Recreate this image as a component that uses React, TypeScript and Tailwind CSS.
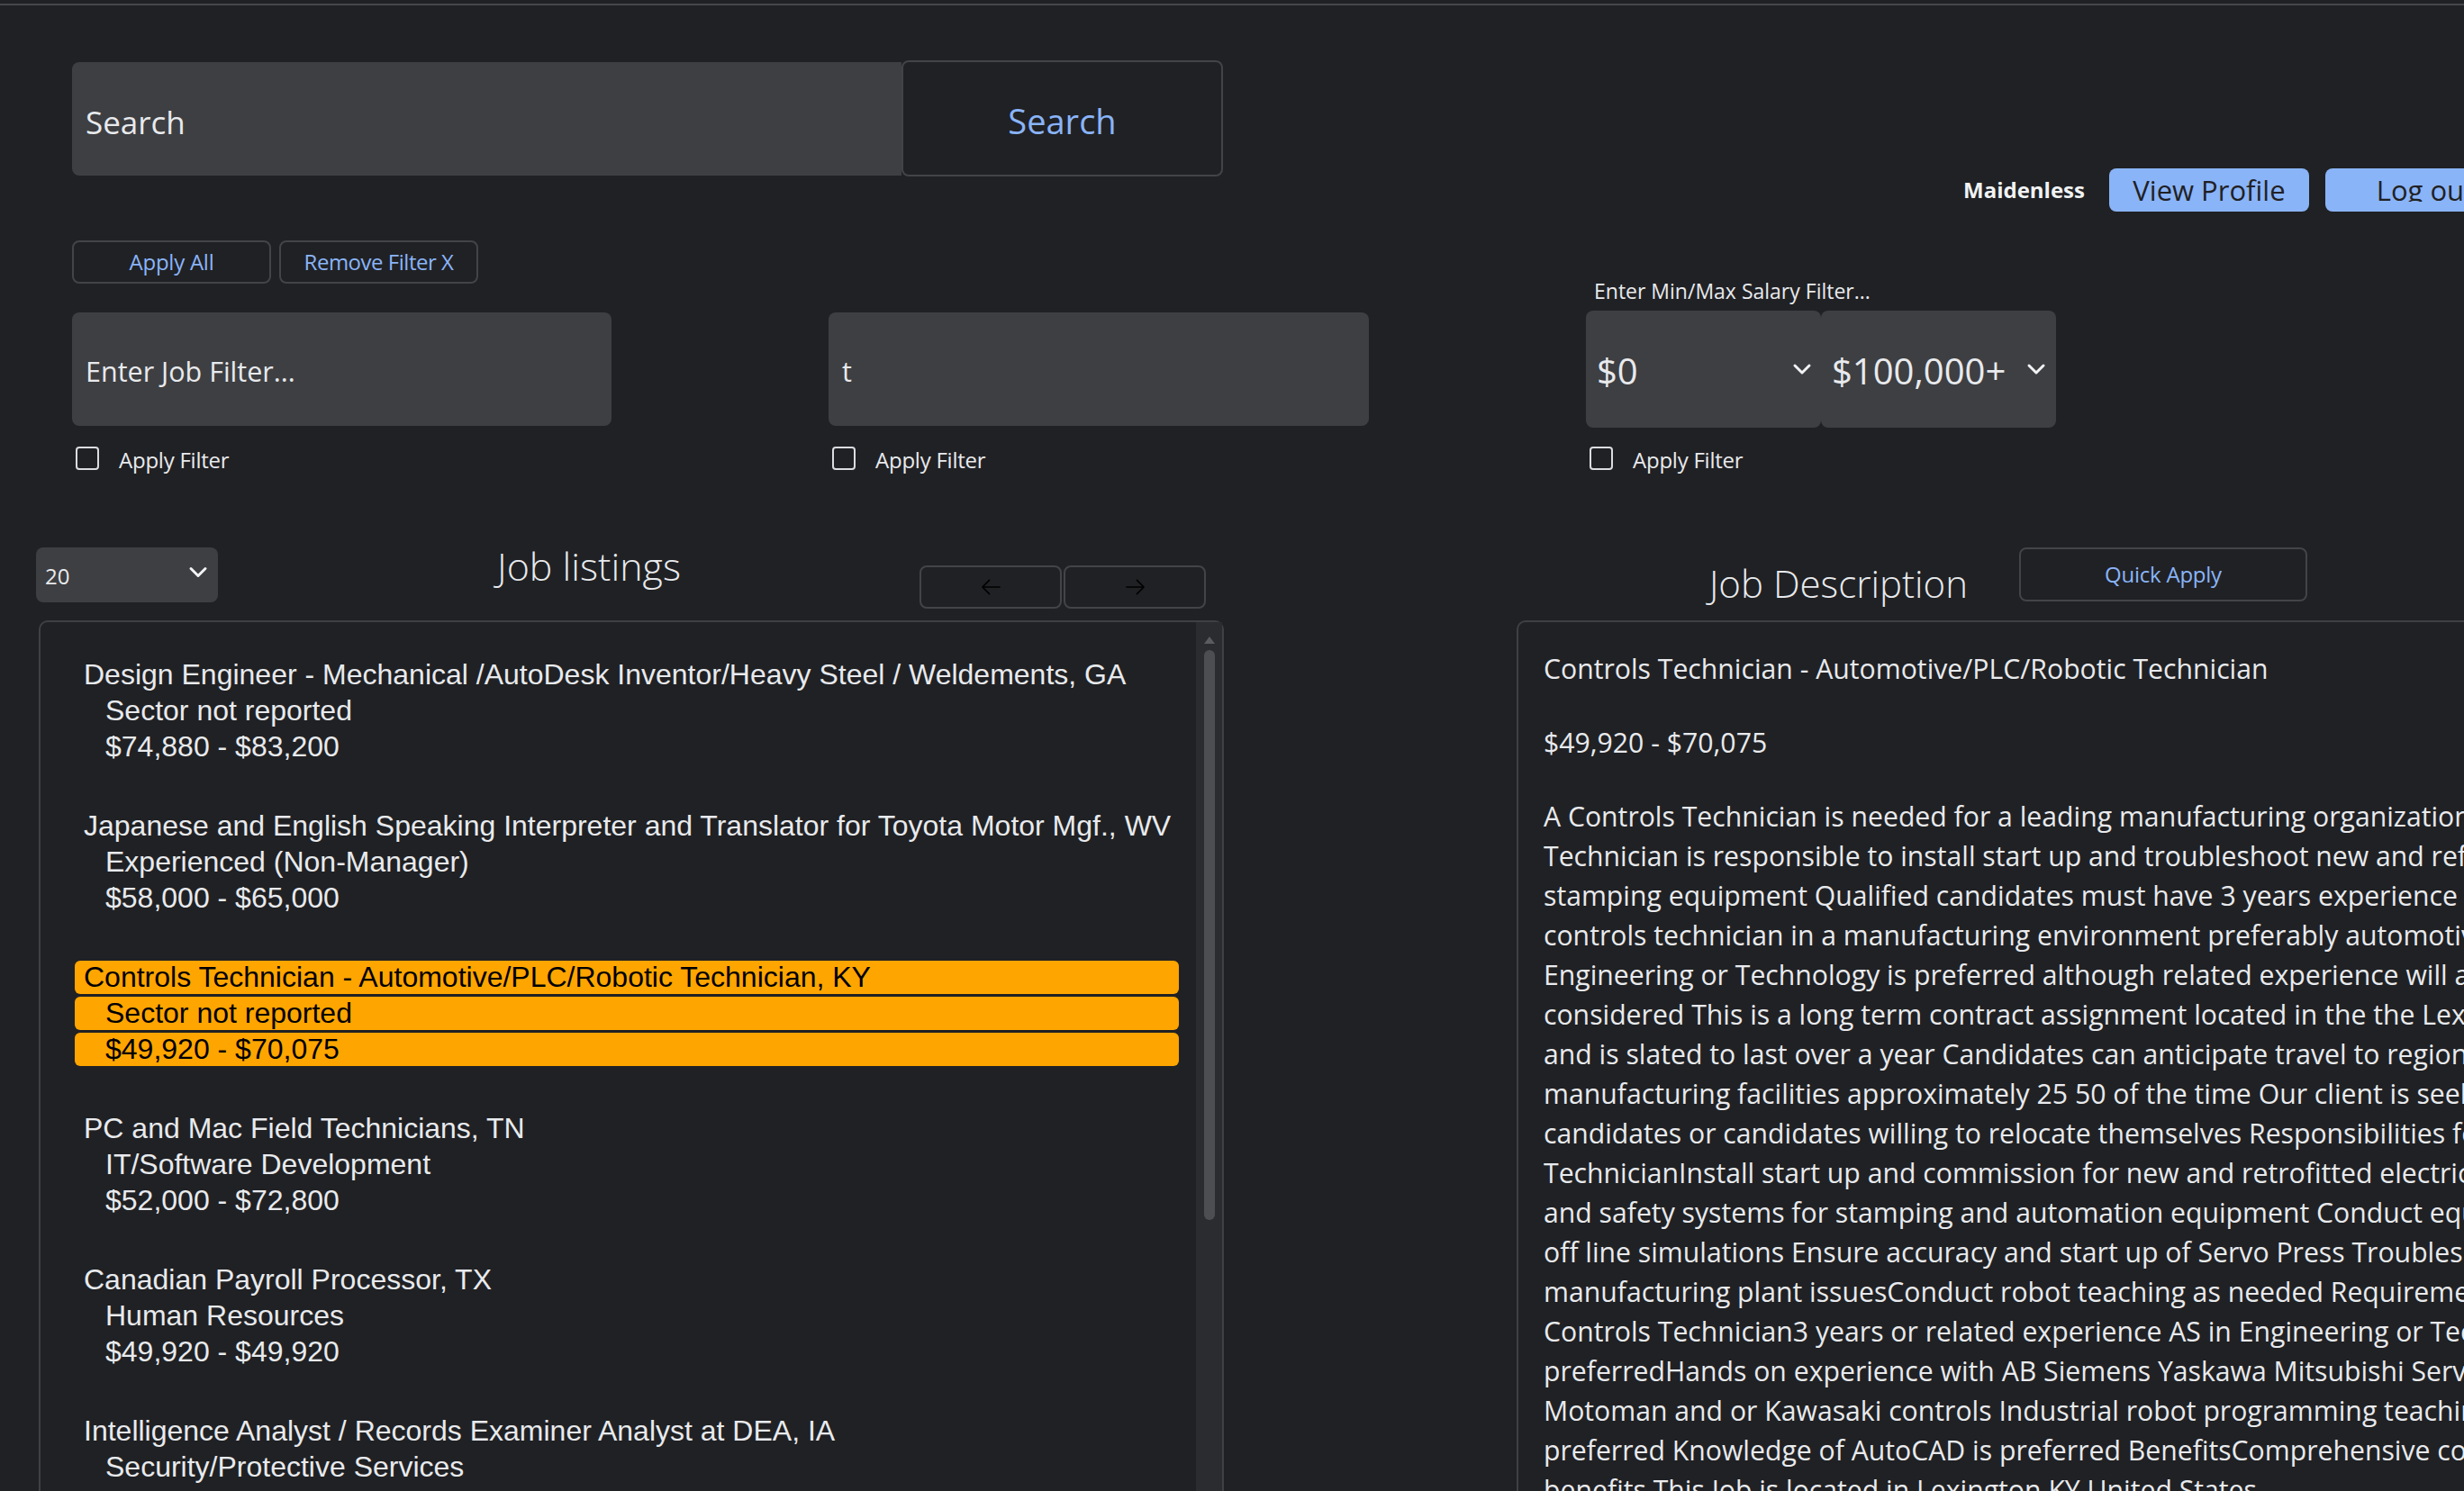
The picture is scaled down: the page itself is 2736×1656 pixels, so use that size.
import React from "react";

const jobs = [
  {
    t: "Design Engineer - Mechanical /AutoDesk Inventor/Heavy Steel / Weldements, GA",
    s: "Sector not reported",
    p: "$74,880 - $83,200",
  },
  {
    t: "Japanese and English Speaking Interpreter and Translator for Toyota Motor Mgf., WV",
    s: "Experienced (Non-Manager)",
    p: "$58,000 - $65,000",
  },
  {
    t: "Controls Technician - Automotive/PLC/Robotic Technician, KY",
    s: "Sector not reported",
    p: "$49,920 - $70,075",
    sel: true,
  },
  {
    t: "PC and Mac Field Technicians, TN",
    s: "IT/Software Development",
    p: "$52,000 - $72,800",
  },
  {
    t: "Canadian Payroll Processor, TX",
    s: "Human Resources",
    p: "$49,920 - $49,920",
  },
  {
    t: "Intelligence Analyst / Records Examiner Analyst at DEA, IA",
    s: "Security/Protective Services",
    p: "$45,760 - $62,400",
  },
  {
    t: "Maintenance Technician, OH",
    s: "Skilled Trades",
    p: "$41,600 - $56,160",
  },
];

const descLines = [
  "A Controls Technician is needed for a leading manufacturing organization The Controls",
  "Technician is responsible to install start up and troubleshoot new and refurbished",
  "stamping equipment Qualified candidates must have 3 years experience as a",
  "controls technician in a manufacturing environment preferably automotive An AS in",
  "Engineering or Technology is preferred although related experience will also be",
  "considered This is a long term contract assignment located in the the Lexington area",
  "and is slated to last over a year Candidates can anticipate travel to regional",
  "manufacturing facilities approximately 25 50 of the time Our client is seeking local",
  "candidates or candidates willing to relocate themselves Responsibilities for the Controls",
  "TechnicianInstall start up and commission for new and retrofitted electrical controls",
  "and safety systems for stamping and automation equipment Conduct equipment",
  "off line simulations Ensure accuracy and start up of Servo Press Troubleshoot",
  "manufacturing plant issuesConduct robot teaching as needed Requirements for the",
  "Controls Technician3 years or related experience AS in Engineering or Technology",
  "preferredHands on experience with AB Siemens Yaskawa Mitsubishi Servo Press Fanuc",
  "Motoman and or Kawasaki controls Industrial robot programming teaching experience",
  "preferred Knowledge of AutoCAD is preferred BenefitsComprehensive compensation and",
  "benefits This Job is located in Lexington KY United States.",
];

function Chevron({ className }: { className?: string }) {
  return (
    <svg
      viewBox="0 0 22 14"
      className={className}
      fill="none"
      stroke="#f1f3f4"
      strokeWidth={3}
      strokeLinecap="round"
      strokeLinejoin="round"
    >
      <polyline points="3,3 11,11 19,3" />
    </svg>
  );
}

function Arrow({ dir }: { dir: "left" | "right" }) {
  return (
    <svg
      viewBox="0 0 24 20"
      className="w-[23px] h-[20px]"
      fill="none"
      stroke="#000000"
      strokeWidth={1.7}
      strokeLinecap="round"
      strokeLinejoin="round"
    >
      {dir === "left" ? (
        <path d="M22 10H2M10 2L2 10L10 18" />
      ) : (
        <path d="M2 10H22M14 2L22 10L14 18" />
      )}
    </svg>
  );
}

function CheckRow() {
  return (
    <div className="flex items-center h-[36px]">
      <div className="ml-[4px] w-[26px] h-[26px] rounded-[4px] border-2 border-[#dadce0]" />
      <span className="ml-[22px] text-[24px] leading-[36px] pt-[3px] tracking-[-0.01em] text-[#e8eaed]">
        Apply Filter
      </span>
    </div>
  );
}

export default function App() {
  return (
    <div className="w-[2736px] h-[1656px] overflow-hidden bg-[#202124] text-[#e8eaed] font-['Open_Sans','Noto_Sans',sans-serif]">
      {/* top rule */}
      <div className="h-[4px]" />
      <div className="h-[2px] bg-[#46474a]" />

      {/* Row A: search + user */}
      <div className="mt-[61px] pl-[80px] flex items-start">
        <div className="shrink-0 w-[921px] h-[126px] mt-[2px] bg-[#3e3f42] rounded-l-[8px] pl-[15px] pt-[49px] text-[35px] leading-none">
          Search
        </div>
        <div className="shrink-0 w-[357px] h-[129px] border-2 border-[#434447] rounded-[8px] pt-[46px] text-center text-[38px] leading-none text-[#8ab4f8]">
          Search
        </div>
        <div className="shrink-0 ml-[822px] mt-[120px] flex items-start">
          <span className="mt-[12px] text-[24px] leading-none font-bold whitespace-nowrap text-[#f1f3f4]">
            Maidenless
          </span>
          <div className="ml-[27px] w-[222px] h-[48px] rounded-[8px] bg-[#8ab4f8] overflow-hidden text-center text-[#202124]">
            <span className="block h-[37px] overflow-hidden pt-[8px] text-[31px] leading-[32px] whitespace-nowrap">
              View Profile
            </span>
          </div>
          <div className="shrink-0 ml-[18px] w-[222px] h-[48px] rounded-[8px] bg-[#8ab4f8] overflow-hidden text-center text-[#202124]">
            <span className="block h-[37px] overflow-hidden pt-[8px] text-[31px] leading-[32px] whitespace-nowrap">
              Log out
            </span>
          </div>
        </div>
      </div>

      {/* Row B: filter buttons */}
      <div className="mt-[32px] pl-[80px] flex gap-[9px]">
        <div className="w-[221px] h-[48px] border-2 border-[#434447] rounded-[8px] flex items-center justify-center text-[24px] leading-none tracking-[-0.01em] text-[#8ab4f8]">
          Apply All
        </div>
        <div className="w-[221px] h-[48px] border-2 border-[#434447] rounded-[8px] flex items-center justify-center text-[24px] leading-none tracking-[-0.02em] text-[#8ab4f8]">
          Remove Filter X
        </div>
      </div>

      {/* Row C: filters */}
      <div className="mt-[32px] pl-[80px] flex items-start">
        <div className="shrink-0 w-[840px]">
          <div className="w-[599px] h-[126px] bg-[#3e3f42] rounded-[8px] pl-[15px] pt-[50px] text-[30.5px] leading-none">
            Enter Job Filter...
          </div>
          <div className="mt-[18px]">
            <CheckRow />
          </div>
        </div>
        <div className="shrink-0 w-[841px]">
          <div className="w-[600px] h-[126px] bg-[#3e3f42] rounded-[8px] pl-[15px] pt-[50px] text-[30.5px] leading-none">
            t
          </div>
          <div className="mt-[18px]">
            <CheckRow />
          </div>
        </div>
        <div className="shrink-0 mt-[-42px]">
          <div className="pl-[9px] text-[23px] leading-[36px] whitespace-nowrap">
            Enter Min/Max Salary Filter...
          </div>
          <div className="mt-[4px] flex">
            <div className="w-[261px] h-[130px] bg-[#3e3f42] rounded-[8px] flex justify-between pl-[12px] pr-[10px]">
              <span className="pt-[47px] text-[40px] leading-none">$0</span>
              <Chevron className="mt-[58px] w-[22px] h-[14px]" />
            </div>
            <div className="w-[261px] h-[130px] bg-[#3e3f42] rounded-[8px] flex justify-between pl-[12px] pr-[11px]">
              <span className="pt-[47px] text-[40px] leading-none whitespace-nowrap">
                $100,000+
              </span>
              <Chevron className="mt-[58px] w-[22px] h-[14px]" />
            </div>
          </div>
          <div className="mt-[16px]">
            <CheckRow />
          </div>
        </div>
      </div>

      {/* Row D: listings + description */}
      <div className="mt-[80px] flex items-start">
        {/* left column */}
        <div className="shrink-0 ml-[40px] w-[1319px]">
          <div className="h-[82px] flex items-start">
            <div className="shrink-0 w-[202px] h-[61px] mt-[1px] bg-[#3e3f42] rounded-[8px] flex justify-between pl-[10px] pr-[11px]">
              <span className="pt-[20px] text-[24px] leading-none">20</span>
              <Chevron className="mt-[20px] w-[22px] h-[15px]" />
            </div>
            <div className="shrink-0 ml-[100px] w-[624px] text-center text-[43px] leading-none font-light whitespace-nowrap">
              Job listings
            </div>
            <div className="shrink-0 ml-[55px] mt-[21px] flex gap-[2px]">
              <div className="w-[158px] h-[48px] border-2 border-[#434447] rounded-[8px] flex items-center justify-center">
                <Arrow dir="left" />
              </div>
              <div className="w-[158px] h-[48px] border-2 border-[#434447] rounded-[8px] flex items-center justify-center">
                <Arrow dir="right" />
              </div>
            </div>
          </div>
          <div className="ml-[3px] h-[1000px] border-2 border-[#3f4043] rounded-t-[10px] flex">
            <div className="flex-1 min-w-0 overflow-hidden pt-[40px] pl-[38px] pr-[19px] font-['Liberation_Sans',Arial,sans-serif] text-[32px]">
              {jobs.map((j, i) => (
                <div key={i} className="pb-[48px]">
                  <div
                    className={`h-[37px] leading-[37px] mb-[3px] rounded-[6px] whitespace-nowrap pl-[10px] ${
                      j.sel ? "bg-[#ffa500] text-black" : "text-[#e8eaed]"
                    }`}
                  >
                    {j.t}
                  </div>
                  <div
                    className={`h-[37px] leading-[37px] mb-[3px] rounded-[6px] whitespace-nowrap pl-[34px] ${
                      j.sel ? "bg-[#ffa500] text-black" : "text-[#e8eaed]"
                    }`}
                  >
                    {j.s}
                  </div>
                  <div
                    className={`h-[37px] leading-[37px] mb-[3px] rounded-[6px] whitespace-nowrap pl-[34px] ${
                      j.sel ? "bg-[#ffa500] text-black" : "text-[#e8eaed]"
                    }`}
                  >
                    {j.p}
                  </div>
                </div>
              ))}
            </div>
            <div className="shrink-0 w-[29px] bg-[#2b2c2f] flex flex-col items-center pt-[16px]">
              <div className="w-0 h-0 border-l-[6px] border-r-[6px] border-b-[8px] border-l-transparent border-r-transparent border-b-[#5b5c5f]" />
              <div className="mt-[7px] w-[12px] h-[633px] rounded-full bg-[#4d4e51]" />
            </div>
          </div>
        </div>

        {/* right column */}
        <div className="shrink-0 ml-[325px] w-[1300px]">
          <div className="h-[82px] flex items-start">
            <div className="shrink-0 w-[558px] pl-[214px] mt-[20px] text-[42px] leading-none font-light whitespace-nowrap">
              Job Description
            </div>
            <div className="shrink-0 w-[320px] h-[60px] mt-[1px] border-2 border-[#434447] rounded-[8px] flex items-center justify-center text-[24px] leading-none tracking-[-0.01em] text-[#8ab4f8]">
              Quick Apply
            </div>
          </div>
          <div className="h-[1000px] border-l-2 border-t-2 border-[#3f4043] rounded-tl-[10px] pt-[30px] pl-[28px] text-[30.2px] leading-[44px] overflow-hidden">
            <p className="mb-[38px] whitespace-nowrap">
              Controls Technician - Automotive/PLC/Robotic Technician
            </p>
            <p className="mb-[38px] whitespace-nowrap">$49,920 - $70,075</p>
            <div>
              {descLines.map((l, i) => (
                <div key={i} className="whitespace-nowrap">
                  {l}
                </div>
              ))}
            </div>
          </div>
        </div>
      </div>
    </div>
  );
}
